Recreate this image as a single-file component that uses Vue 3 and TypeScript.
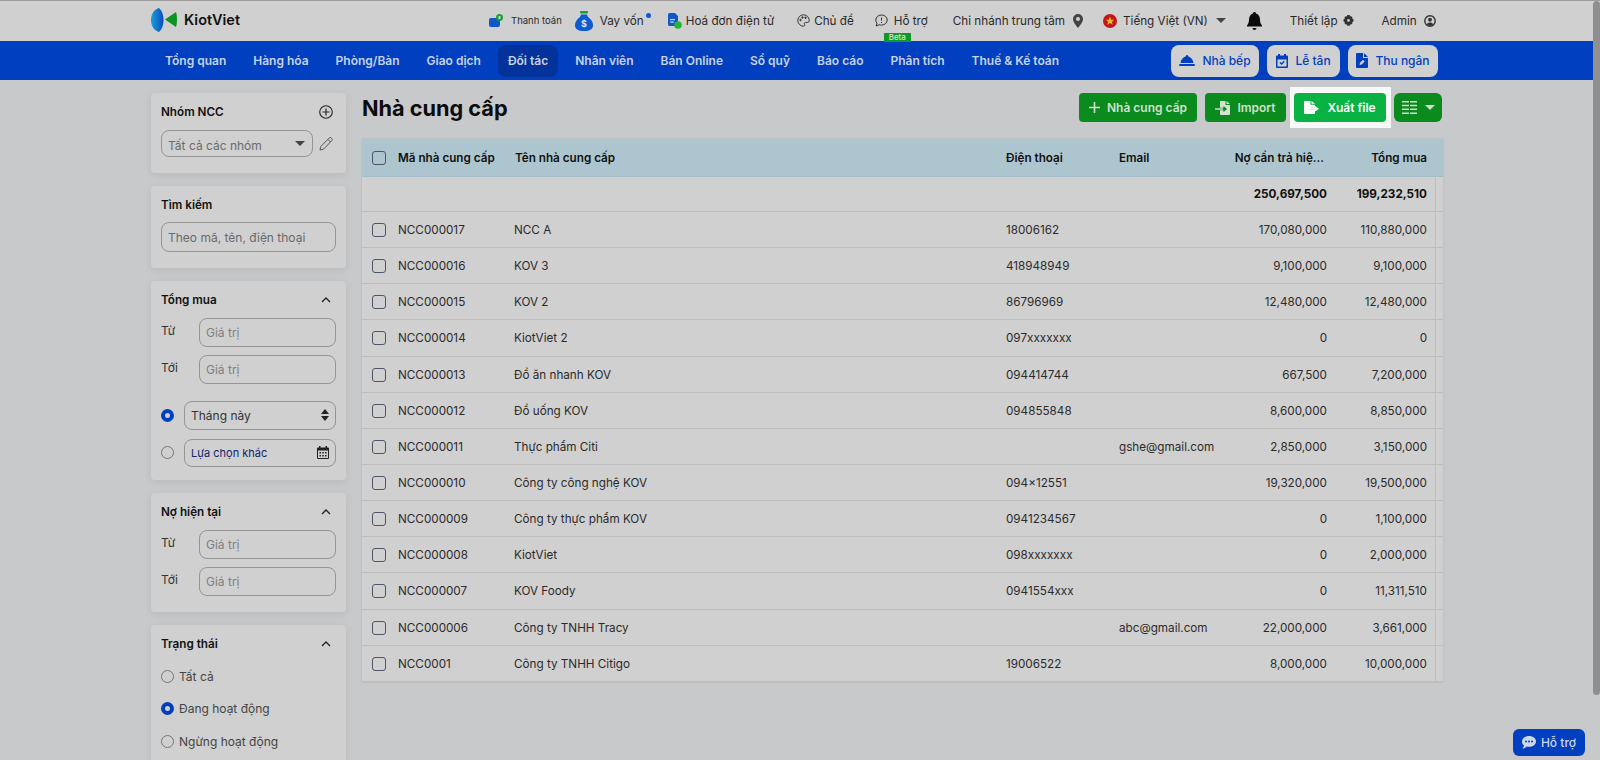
<script setup lang="ts">
interface Supplier { code: string; name: string; phone: string; email: string; debt: string; total: string }
const navItems: string[] = ['Tổng quan', 'Hàng hóa', 'Phòng/Bàn', 'Giao dịch', 'Đối tác', 'Nhân viên', 'Bán Online', 'Sổ quỹ', 'Báo cáo', 'Phân tích', 'Thuế & Kế toán']
const suppliers: Supplier[] = [
  { code: 'NCC000017', name: 'NCC A', phone: '18006162', email: '', debt: '170,080,000', total: '110,880,000' },
  { code: 'NCC000016', name: 'KOV 3', phone: '418948949', email: '', debt: '9,100,000', total: '9,100,000' },
  { code: 'NCC000015', name: 'KOV 2', phone: '86796969', email: '', debt: '12,480,000', total: '12,480,000' },
  { code: 'NCC000014', name: 'KiotViet 2', phone: '097xxxxxxx', email: '', debt: '0', total: '0' },
  { code: 'NCC000013', name: 'Đồ ăn nhanh KOV', phone: '094414744', email: '', debt: '667,500', total: '7,200,000' },
  { code: 'NCC000012', name: 'Đồ uống KOV', phone: '094855848', email: '', debt: '8,600,000', total: '8,850,000' },
  { code: 'NCC000011', name: 'Thực phẩm Citi', phone: '', email: 'gshe@gmail.com', debt: '2,850,000', total: '3,150,000' },
  { code: 'NCC000010', name: 'Công ty công nghệ KOV', phone: '094×12551', email: '', debt: '19,320,000', total: '19,500,000' },
  { code: 'NCC000009', name: 'Công ty thực phẩm KOV', phone: '0941234567', email: '', debt: '0', total: '1,100,000' },
  { code: 'NCC000008', name: 'KiotViet', phone: '098xxxxxxx', email: '', debt: '0', total: '2,000,000' },
  { code: 'NCC000007', name: 'KOV Foody', phone: '0941554xxx', email: '', debt: '0', total: '11,311,510' },
  { code: 'NCC000006', name: 'Công ty TNHH Tracy', phone: '', email: 'abc@gmail.com', debt: '22,000,000', total: '3,661,000' },
  { code: 'NCC0001', name: 'Công ty TNHH Citigo', phone: '19006522', email: '', debt: '8,000,000', total: '10,000,000' },
]
</script>

<template>
  <div class="page">
    <header class="topbar">
      <div class="logo">
        <svg width="26" height="24" viewBox="0 0 26 24">
          <defs>
            <linearGradient id="lens" x1="0" x2="1" y1="0" y2="0">
              <stop offset="0" stop-color="#1aa0d8" />
              <stop offset="1" stop-color="#0a4cc0" />
            </linearGradient>
          </defs>
          <path d="M8 0C3 1.500 0 6 0 12s3 10.500 8 12c3-2.500 4.500-7 4.500-12S11 2.500 8 0z" fill="url(#lens)" />
          <path d="M14 11.500L25 4c.8 2.500 1 5 1 7.500s-.2 5-1 7.500z" fill="#0d9420" />
        </svg>
        <span>KiotViet</span>
      </div>
      <div class="tool t-pay">
        <svg width="14" height="14" viewBox="0 0 14 14"><rect x="0" y="4" width="11" height="9" rx="2" fill="#1058c8" /><circle cx="10.5" cy="3.5" r="3.5" fill="#12a03a" /><rect x="9.5" y="2" width="2" height="3" fill="#d0d0d0" /></svg>
        <span class="small">Thanh toán</span>
      </div>
      <div class="tool t-loan">
        <svg width="18" height="20" viewBox="0 0 18 20"><rect x="5" y="0" width="8" height="2.4" rx="1" fill="#12a03a" /><path d="M6 3.5h6L13 6c3 2 5 5 5 8 0 4-3 6-9 6s-9-2-9-6c0-3 2-6 5-8z" fill="#0c5ad0" /><text x="9" y="16" text-anchor="middle" font-size="9" font-weight="700" fill="#dfe6f0" font-family="Inter">$</text></svg>
        <span>Vay vốn</span><i class="dot"></i>
      </div>
      <div class="tool t-inv">
        <svg width="15" height="16" viewBox="0 0 15 16"><path d="M1 1.5A1.5 1.5 0 0 1 2.500 0H8l3 3v10H2.500A1.500 1.500 0 0 1 1 11.500z" fill="#1058c8" /><circle cx="11" cy="12" r="3.800" fill="#22b53a" /><rect x="3" y="6" width="5" height="1.200" fill="#d0d0d0" /><rect x="3" y="8.500" width="4" height="1.200" fill="#d0d0d0" /></svg>
        <span>Hoá đơn điện tử</span>
      </div>
      <div class="tool t-theme">
        <svg width="13" height="13" viewBox="0 0 13 13" fill="none" stroke="#333" stroke-width="1"><path d="M6.500.8a5.700 5.700 0 1 0 0 11.400c1.300 0 1.500-1 1-1.800-.6-1 0-2 1.200-2h2c1 0 1.500-.7 1.500-1.900C12.200 3.300 9.700.8 6.500.8z" /><circle cx="3.500" cy="6" r=".7" fill="#333" /><circle cx="5.500" cy="3.500" r=".7" fill="#333" /><circle cx="8.500" cy="3.800" r=".7" fill="#333" /></svg>
        <span>Chủ đề</span>
      </div>
      <div class="tool t-help">
        <svg width="13" height="13" viewBox="0 0 13 13" fill="none" stroke="#333" stroke-width="1"><path d="M6.500 1C3.200 1 .8 3.200.8 6c0 1.200.5 2.300 1.200 3.100L1.200 12l3-1.300c.7.300 1.500.4 2.300.4 3.200 0 5.700-2.200 5.700-5.100S9.700 1 6.500 1z" /><path d="M6.500 3.500v3.200M6.500 8v1" /></svg>
        <span>Hỗ trợ</span>
        <b class="beta">Beta</b>
      </div>
      <div class="tool t-branch">
        <span>Chi nhánh trung tâm</span>
        <svg width="10" height="14" viewBox="0 0 10 14"><path fill-rule="evenodd" d="M5 0a5 5 0 0 1 5 5c0 3-3 6.500-5 9-2-2.500-5-6-5-9a5 5 0 0 1 5-5zm0 3a2 2 0 1 0 0 4 2 2 0 0 0 0-4z" fill="#444" /></svg>
      </div>
      <div class="tool t-lang">
        <svg width="14" height="14" viewBox="0 0 14 14"><circle cx="7" cy="7" r="7" fill="#c5161d" /><path d="M7 2.800l1.200 3h3.100l-2.500 1.900.9 3.100L7 9l-2.700 1.800.9-3.100-2.500-1.900h3.100z" fill="#e8c020" /></svg>
        <span>Tiếng Việt (VN)</span>
        <i class="caret"></i>
      </div>
      <svg class="bell" width="15" height="18" viewBox="0 0 15 18"><path d="M7.500 0c1 0 1.500.7 1.500 1.500C11.500 2.300 13 4.500 13 7.500c0 3 .7 4.500 2 6v1H0v-1c1.300-1.500 2-3 2-6C2 4.500 3.500 2.300 6 1.500 6 .7 6.500 0 7.500 0z" fill="#0c0c0c" /><path d="M5.500 16h4a2 2 0 0 1-4 0z" fill="#0c0c0c" /></svg>
      <div class="tool t-set">
        <span>Thiết lập</span>
        <svg width="11" height="11" viewBox="0 0 11 11"><path fill-rule="evenodd" d="M4.300 0h2.400l.3 1.500 1-.5 1.700 1.700-.6 1.100 1.400.4v2.400l-1.400.4.6 1.100L8 9.800l-1-.5-.3 1.500H4.300L4 9.300l-1 .5-1.700-1.700.6-1.100L.5 6.600V4.200l1.400-.4-.6-1.100L3 1l1 .5zM5.500 4a1.400 1.400 0 1 0 0 2.800 1.400 1.400 0 0 0 0-2.800z" fill="#333" /></svg>
      </div>
      <div class="tool t-admin">
        <span>Admin</span>
        <svg width="12" height="12" viewBox="0 0 12 12"><circle cx="6" cy="6" r="5.200" fill="none" stroke="#333" stroke-width="1.400" /><circle cx="6" cy="4.700" r="1.900" fill="#333" /><path d="M2.800 9.500c.6-1.500 1.800-2 3.200-2s2.600.5 3.200 2L6 11z" fill="#333" /></svg>
      </div>
    </header>

    <nav class="navbar">
      <ul class="menu">
        <li v-for="item in navItems" :key="item" :class="{ active: item === 'Đối tác' }">{{ item }}</li>
      </ul>
      <div class="nav-actions">
        <button class="nav-btn w1">
          <svg width="16" height="11" viewBox="0 0 16 11"><path d="M8 0a1 1 0 0 1 1 1.200C12 2 14 4.500 14.500 8h-13C2 4.500 4 2 7 1.200A1 1 0 0 1 8 0z" fill="#0040c0" /><rect y="9" width="16" height="2" rx="1" fill="#0040c0" /></svg>
          Nhà bếp
        </button>
        <button class="nav-btn w2">
          <svg width="12" height="14" viewBox="0 0 12 14"><path fill-rule="evenodd" d="M2 0h2v1.500h4V0h2v1.500h1a1 1 0 0 1 1 1V13a1 1 0 0 1-1 1H1a1 1 0 0 1-1-1V2.500a1 1 0 0 1 1-1h1zM1.500 5.500V12.500h9V5.500zM3.500 9l1-1 1 1 2.300-2.300 1 1L5.500 11z" fill="#0040c0" /></svg>
          Lễ tân
        </button>
        <button class="nav-btn w3">
          <svg width="12" height="15" viewBox="0 0 12 15"><path d="M1 0h6v5h5v9a1 1 0 0 1-1 1H1a1 1 0 0 1-1-1V1a1 1 0 0 1 1-1z" fill="#0040c0" /><path d="M8 0l4 4H8z" fill="#0040c0" /><path d="M3.500 12l.5-2.200 3-3 1.700 1.700-3 3z" fill="#d0d0d0" /></svg>
          Thu ngân
        </button>
      </div>
    </nav>

    <div class="body">
      <aside class="side">
        <section class="card c1">
          <div class="card-title">
            <span>Nhóm NCC</span>
            <svg class="add" width="14" height="14" viewBox="0 0 14 14" fill="none" stroke="#222" stroke-width="1.100"><circle cx="7" cy="7" r="6.300" /><path d="M7 3.500v7M3.500 7h7" /></svg>
          </div>
          <div class="group-row">
            <div class="field group-sel"><span>Tất cả các nhóm</span><i class="caret"></i></div>
            <svg width="14" height="14" viewBox="0 0 14 14" fill="none" stroke="#555" stroke-width="1"><path d="M1 13l.8-3.500L10.200 1a1.400 1.400 0 0 1 2 0l.6.6a1.400 1.400 0 0 1 0 2L4.500 12.200zM9 2.500l2.500 2.500" /></svg>
          </div>
        </section>

        <section class="card c2">
          <div class="card-title"><span>Tìm kiếm</span></div>
          <div class="field search"><span>Theo mã, tên, điện thoại</span></div>
        </section>

        <section class="card c3">
          <div class="card-title">
            <span>Tổng mua</span>
            <svg class="chev" width="10" height="6" viewBox="0 0 10 6" fill="none" stroke="#222" stroke-width="1.300"><path d="M1 5l4-4 4 4" /></svg>
          </div>
          <div class="range"><label>Từ</label><div class="field val"><span>Giá trị</span></div></div>
          <div class="range"><label>Tới</label><div class="field val"><span>Giá trị</span></div></div>
          <div class="pick first">
            <i class="radio on"></i>
            <div class="field choice dark">
              <span>Tháng này</span>
              <svg width="8" height="12" viewBox="0 0 8 12" fill="#222"><path d="M4 0l4 5H0zM4 12l4-5H0z" /></svg>
            </div>
          </div>
          <div class="pick">
            <i class="radio"></i>
            <div class="field choice navy">
              <span>Lựa chọn khác</span>
              <svg width="12" height="13" viewBox="0 0 12 13"><path fill-rule="evenodd" d="M2 0h1.500v1.500h5V0H10v1.500h1a1 1 0 0 1 1 1V12a1 1 0 0 1-1 1H1a1 1 0 0 1-1-1V2.500a1 1 0 0 1 1-1h1zM1 4.500V12h10V4.500zM2.500 6h1.500v1.500H2.500zM5.250 6h1.500v1.500h-1.500zM8 6h1.500v1.500H8zM2.500 9h1.500v1.500H2.500zM5.250 9h1.500v1.500h-1.500zM8 9h1.500v1.500H8z" fill="#222" /></svg>
            </div>
          </div>
        </section>

        <section class="card c4">
          <div class="card-title">
            <span>Nợ hiện tại</span>
            <svg class="chev" width="10" height="6" viewBox="0 0 10 6" fill="none" stroke="#222" stroke-width="1.300"><path d="M1 5l4-4 4 4" /></svg>
          </div>
          <div class="range"><label>Từ</label><div class="field val"><span>Giá trị</span></div></div>
          <div class="range"><label>Tới</label><div class="field val"><span>Giá trị</span></div></div>
        </section>

        <section class="card c5">
          <div class="card-title">
            <span>Trạng thái</span>
            <svg class="chev" width="10" height="6" viewBox="0 0 10 6" fill="none" stroke="#222" stroke-width="1.300"><path d="M1 5l4-4 4 4" /></svg>
          </div>
          <div class="status first"><i class="radio"></i><span>Tất cả</span></div>
          <div class="status"><i class="radio on"></i><span>Đang hoạt động</span></div>
          <div class="status"><i class="radio"></i><span>Ngừng hoạt động</span></div>
        </section>
      </aside>

      <main class="main">
        <div class="toolbar">
          <h1>Nhà cung cấp</h1>
          <div class="actions">
            <button class="act a1">
              <svg width="11" height="11" viewBox="0 0 11 11" fill="#cfe0d0"><path d="M4.700 0h1.600v4.700H11v1.600H6.300V11H4.700V6.300H0V4.700h4.700z" /></svg>
              Nhà cung cấp
            </button>
            <button class="act a2">
              <svg width="15" height="14" viewBox="0 0 15 14" fill="#d6e2d6"><path d="M5 0h5.500v4H15v9a1 1 0 0 1-1 1H6a1 1 0 0 1-1-1V9.200h3.500v1.800L12 8 8.500 5v1.800H5z" /><path d="M11.500 0L15 3h-3.500z" /><rect y="7.300" width="8" height="1.400" /></svg>
              Import
            </button>
            <div class="spot">
              <button class="act a3">
                <svg width="15" height="13" viewBox="0 0 15 13" fill="#fff"><path d="M1 0h5.500v3.800H11v3H6v1.800h5V12a1 1 0 0 1-1 1H1a1 1 0 0 1-1-1V1a1 1 0 0 1 1-1z" /><path d="M7.500 0L11 2.800H7.500z" /><path d="M6 7h5V5l4 2.700-4 2.800V8.500H6z" /></svg>
                Xuất file
              </button>
            </div>
            <button class="act a4">
              <svg width="15" height="13" viewBox="0 0 15 13" fill="#cfdccf"><path d="M0 0h7v1.500H0zM8 0h7v1.500H8zM0 3.800h7v1.500H0zM8 3.800h7v1.500H8zM0 7.600h7v1.500H0zM8 7.600h7v1.500H8zM0 11.400h7v1.500H0zM8 11.400h7v1.500H8z" /></svg>
              <i class="caret pale"></i>
            </button>
          </div>
        </div>

        <div class="table">
          <div class="row head">
            <div class="cell-check"><i class="check"></i></div>
            <div>Mã nhà cung cấp</div>
            <div class="hd-name">Tên nhà cung cấp</div>
            <div>Điện thoại</div>
            <div>Email</div>
            <div class="num hd-debt">Nợ cần trả hiệ...</div>
            <div class="num">Tổng mua</div>
          </div>
          <div class="row total">
            <div></div><div></div><div></div><div></div><div></div>
            <div class="num">250,697,500</div>
            <div class="num">199,232,510</div>
          </div>
          <div v-for="s in suppliers" :key="s.code" class="row item">
            <div class="cell-check"><i class="check"></i></div>
            <div>{{ s.code }}</div>
            <div>{{ s.name }}</div>
            <div>{{ s.phone }}</div>
            <div>{{ s.email }}</div>
            <div class="num">{{ s.debt }}</div>
            <div class="num">{{ s.total }}</div>
          </div>
        </div>
      </main>
    </div>

    <button class="support">
      <svg width="14" height="13" viewBox="0 0 14 13"><path fill-rule="evenodd" d="M7 0c3.900 0 7 2.400 7 5.400s-3.100 5.400-7 5.400c-.8 0-1.500-.1-2.200-.3C3.700 11.600 2 12.500.4 12.500c1-.9 1.500-1.900 1.600-3C.7 8.500 0 7 0 5.400 0 2.400 3.100 0 7 0zM4 4.400a1 1 0 1 0 0 2 1 1 0 0 0 0-2zm3 0a1 1 0 1 0 0 2 1 1 0 0 0 0-2zm3 0a1 1 0 1 0 0 2 1 1 0 0 0 0-2z" fill="#cfd6ea" /></svg>
      Hỗ trợ
    </button>
    <div class="scrollthumb"></div>
  </div>
</template>

<style>
html, body { margin: 0; height: 760px; overflow: hidden; background: #c8c9cb; }
</style>

<style scoped>
.page { position: relative; width: 1600px; height: 760px; overflow: hidden; background: #c8c9cb; font-family: Inter, "Noto Sans", sans-serif; font-size: 12px; color: #222; box-sizing: border-box; }
.topbar { display: flex; align-items: center; height: 41px; box-sizing: border-box; border-top: 1px solid #9d9d9d; background: #d0d0d0; padding-left: 151px; padding-bottom: 1px; }
.logo { display: flex; align-items: center; gap: 7px; width: 338px; font-weight: 600; font-size: 14.500px; color: #111; margin-top: -2px; }
.tool { display: flex; align-items: center; position: relative; white-space: nowrap; color: #2a2a2a; font-size: 11.700px; }
.small { font-size: 9.500px; }
.t-pay { gap: 8px; }
.t-loan { gap: 7px; margin-left: 13px; }
.dot { position: absolute; right: -7px; top: 2px; width: 5px; height: 5px; border-radius: 50%; background: #0c5ad0; }
.t-inv { gap: 4px; margin-left: 23px; }
.t-theme { gap: 4px; margin-left: 23px; }
.t-help { gap: 6px; margin-left: 21px; }
.beta { position: absolute; left: 9px; top: 19px; width: 27px; height: 9px; background: #0f9a28; color: #cfe8d0; font-weight: 500; font-size: 8px; line-height: 9px; text-align: center; }
.t-branch { gap: 8px; margin-left: 25px; }
.t-lang { gap: 6px; margin-left: 20px; }
.caret { display: inline-block; width: 0; height: 0; border-left: 5px solid transparent; border-right: 5px solid transparent; border-top: 5px solid #444; }
.t-lang .caret { margin-left: 2px; }
.bell { margin-left: 21px; }
.t-set { gap: 5px; margin-left: 28px; }
.t-admin { gap: 7px; margin-left: 28px; }

.navbar { display: flex; align-items: center; justify-content: space-between; height: 39px; padding: 0 162px 0 155px; background: #0040c0; box-sizing: border-box; }
.menu { display: flex; list-style: none; margin: 0; padding: 0; gap: 7px; }
.menu li { display: flex; align-items: center; height: 32px; padding: 0 10px; border-radius: 8px; color: #c8d2e4; font-weight: 600; font-size: 12px; white-space: nowrap; }
.menu li.active { background: #03329a; }
.nav-actions { display: flex; gap: 8px; }
.nav-btn { display: flex; align-items: center; justify-content: center; gap: 7px; height: 32px; border: 0; border-radius: 8px; background: #d0d0d0; color: #0040c0; font: 500 12px Inter, sans-serif; padding: 0; }
.w1 { width: 88px; }
.w2 { width: 73px; }
.w3 { width: 90px; }

.body { display: flex; gap: 16px; padding: 13px 157px 0 151px; align-items: flex-start; }
.side { display: flex; flex-direction: column; gap: 13px; width: 195px; flex: none; }
.card { background: #d0d0d0; border-radius: 4px; box-shadow: 0 2px 8px rgba(0, 0, 0, .08); padding: 10px; box-sizing: border-box; }
.c1 { height: 80px; }
.c2 { height: 82px; }
.c3 { height: 199px; }
.c4 { height: 119px; }
.c5 { height: 150px; }
.card-title { display: flex; align-items: center; justify-content: space-between; height: 18px; margin-bottom: -1px; font-weight: 600; font-size: 11.700px; color: #111; }
.add { margin-right: 3px; }
.chev { margin-right: 5px; }
.field { display: flex; align-items: center; justify-content: space-between; box-sizing: border-box; border: 1px solid #959595; border-radius: 8px; padding: 0 6px; color: #6a6a6a; font-size: 12px; }
.group-row { display: flex; align-items: center; justify-content: space-between; margin-top: 10px; padding-right: 3px; }
.group-sel { width: 152px; height: 27px; }
.group-sel span { margin-top: 3px; }
.group-sel .caret { margin-right: 1px; }
.search { height: 30px; margin-top: 9px; }
.range { display: flex; align-items: center; height: 29px; margin-top: 10px; }
.range + .range { margin-top: 8px; }
.range label { width: 38px; margin-top: -4px; color: #333; }
.val { flex: 1; height: 29px; color: #808080; }
.pick { display: flex; align-items: center; gap: 10px; margin-top: 9px; }
.pick.first { margin-top: 17px; }
.radio { display: block; flex: none; width: 13px; height: 13px; box-sizing: border-box; border: 1px solid #777; border-radius: 50%; }
.radio.on { border: 4px solid #0040c0; background: #d0d0d0; }
.choice { flex: 1; height: 28.500px; }
.dark { color: #333; }
.navy { color: #10246a; font-size: 11px; }
.status { display: flex; align-items: center; gap: 5px; height: 16px; margin-top: 16.500px; color: #444; }
.status.first { margin-top: 16px; }

.main { flex: 1; min-width: 0; }
.toolbar { display: flex; align-items: center; justify-content: space-between; height: 29px; margin-bottom: 17px; }
h1 { margin: 1px 0 0; font-size: 21.700px; font-weight: 700; color: #0c0c0c; line-height: 29px; }
.actions { display: flex; align-items: center; gap: 8px; margin-right: 1px; }
.act { display: flex; align-items: center; justify-content: center; gap: 7px; height: 29px; border: 0; border-radius: 4px; padding: 0; background: #0b8a1d; color: #cfe0d0; font: 600 12px Inter, sans-serif; }
.a1 { width: 118px; }
.a2 { width: 81px; }
.spot { display: flex; padding: 6px 5px 6px 4px; margin: -6px -5px -6px -4px; background: #f7f8f8; }
.a3 { width: 92px; background: #0ab244; color: #fff; gap: 8px; }
.a4 { width: 48px; gap: 8px; border-radius: 6px; }
.pale { border-top-color: #cfdccf; }

.table { background: #d0d0d0; box-shadow: 0 0 2px rgba(0, 0, 0, .12); font-size: 11.700px; }
.row { display: grid; grid-template-columns: 36px 116px 492px 113px 110px 98px 100px; align-items: center; height: 36.150px; padding-right: 16px; box-sizing: border-box; border-bottom: 1px solid #bdbdbd; color: #2b2b2b; position: relative; white-space: nowrap; }
.item { padding-top: 1px; }
.row::after { content: ""; position: absolute; top: 0; bottom: -1px; right: 0; width: 7px; border-left: 1px solid #bdbdbd; }
.head { height: 38px; background: #adc5cf; color: #111; font-weight: 600; font-size: 11.700px; border-bottom: 1px solid #a3bcc7; }
.head::after { display: none; }
.hd-name { padding-left: 1px; }
.total { height: 35px; font-weight: 700; color: #111; }
.num { text-align: right; }
.hd-debt { padding-right: 3px; }
.cell-check { display: flex; padding-left: 10px; }
.check { display: block; width: 14px; height: 14px; box-sizing: border-box; border: 1px solid #4c5668; border-radius: 3px; }

.support { position: absolute; left: 1513px; top: 729px; display: flex; align-items: center; justify-content: center; gap: 5px; width: 72px; height: 27px; border: 0; border-radius: 6px; padding: 0; background: #0040c0; color: #cfd6ea; font: 500 12px Inter, sans-serif; }
.scrollthumb { position: absolute; right: 0; top: 1px; width: 7px; height: 694px; border-radius: 4px; background: #8f8f8f; }
</style>
